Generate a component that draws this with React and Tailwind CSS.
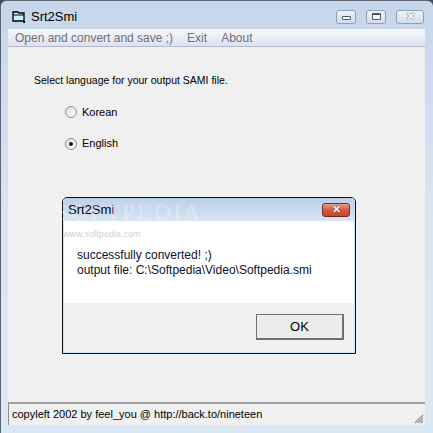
import React from 'react';

const sans = { fontFamily: '"Liberation Sans", Arial, sans-serif' };

const CaptionButton = ({ width, children }) => (
  <div
    className={`h-[14px] ${width} flex items-center justify-center rounded-[3px] border border-[#8e9fb6] bg-gradient-to-b from-[#eef3fa] to-[#d3deec]`}
  >
    {children}
  </div>
);

const Radio = ({ checked, label }) => (
  <div className="flex items-center gap-[5px]">
    <div className="w-[12px] h-[12px] rounded-full border border-[#8f8f8f] bg-gradient-to-br from-[#dcdcdc] to-white flex items-center justify-center">
      {checked && <div className="w-[4px] h-[4px] rounded-full bg-[#1a1a1a]" />}
    </div>
    <span className="text-[11px] text-black">{label}</span>
  </div>
);

const App = () => {
  return (
    <div
      className="relative w-[433px] h-[433px] overflow-hidden bg-[#3b4a5c]"
      style={sans}
    >
      <div className="w-[433px] h-[433px] flex flex-col rounded-t-[6px] border-t border-l border-[#5b6470] bg-gradient-to-b from-[#c6d6eb] via-[#d9e5f3] to-[#dbe7f4]">
        {/* Title bar */}
        <div className="h-[28px] flex items-center pl-[11px] pr-[9px] pt-[3px]">
          <svg width="14" height="12" viewBox="0 0 14 12" className="mr-[5px]">
            <path d="M1 1h5l1 1h5v8H1z" fill="#c8f4ff" stroke="#000" strokeWidth="1.3" />
            <path d="M1 4h11" stroke="#000" strokeWidth="1" />
            <rect x="11" y="10" width="2" height="2" fill="#000" />
          </svg>
          <span className="text-[13px] text-black">Srt2Smi</span>
          <div className="ml-auto flex items-center gap-[10px]">
            <CaptionButton width="w-[20px]">
              <div className="w-[9px] h-[4px] border border-[#4a5568] bg-white rounded-[1px] mt-[3px]" />
            </CaptionButton>
            <CaptionButton width="w-[20px]">
              <div className="w-[9px] h-[7px] border border-[#4a5568] border-t-2 bg-white rounded-[1px]" />
            </CaptionButton>
            <CaptionButton width="w-[28px]">
              <span className="text-[11px] font-bold text-white leading-none [text-shadow:0_0_1px_#4a5568,0_0_1px_#4a5568]">✕</span>
            </CaptionButton>
          </div>
        </div>

        {/* Menu bar */}
        <div className="ml-[7px] mr-[8px] h-[18px] flex items-center gap-[14px] pl-[7px] border-b border-[#b3b9cb] bg-gradient-to-b from-[#f8f9fc] to-[#dde2f1] text-[12px] text-[#707070]">
          <span>Open and convert and save ;)</span>
          <span>Exit</span>
          <span>About</span>
        </div>

        {/* Client area */}
        <div className="ml-[7px] mr-[8px] flex-1 flex flex-col bg-[#f0f0f0] text-[11px] text-black">
          <div className="flex-1 pt-[26px] pl-[26px]">
            <div className="text-[10.5px]">Select language for your output SAMI file.</div>
            <div className="mt-[15px] ml-[31px] flex flex-col gap-[15px]">
              <Radio label="Korean" />
              <Radio checked label="English" />
            </div>
          </div>

          {/* Status bar */}
          <div className="h-[24px] flex items-end">
            <div className="relative w-full h-[23px] border-t-2 border-[#a0a0a0] border-l border-l-[#8e8e8e] flex items-center pl-[3px] text-[11px]">
              copyleft 2002 by feel_you @ http://back.to/nineteen
              <svg width="12" height="12" viewBox="0 0 12 12" className="absolute right-[1px] bottom-[1px]">
                <path d="M11 3L3 11M11 6L6 11M11 9L9 11" stroke="#9a9a9a" strokeWidth="1.5" />
              </svg>
            </div>
          </div>
        </div>
        <div className="h-[8px]" />
      </div>

      {/* Message dialog */}
      <div className="absolute left-[62px] top-[197px] w-[294px] h-[157px] flex flex-col rounded-t-[5px] border border-[#111] bg-[#f0f0f0] overflow-hidden">
        <div className="h-[23px] flex items-center pl-[5px] pr-[5px] bg-gradient-to-b from-[#bdd0e8] to-[#d8e5f4]">
          <span className="text-[13px] text-black">Srt2Smi</span>
          <div className="ml-auto w-[28px] h-[14px] rounded-[3px] border border-[#7a2b20] bg-gradient-to-b from-[#e8a08e] via-[#d4593f] to-[#c9442a] flex items-center justify-center">
            <span className="text-[11px] font-bold text-white leading-none [text-shadow:0_0_1px_#5a1a10,0_0_1px_#5a1a10]">✕</span>
          </div>
        </div>
        <div className="flex-1 flex flex-col border-l border-r border-b border-[#c5e6f5]">
          <div className="h-[82px] bg-white pl-[13px] pt-[27px] text-[12px] leading-[15px] text-[#10102a]">
            <div>successfully converted! ;)</div>
            <div>output file: C:\Softpedia\Video\Softpedia.smi</div>
          </div>
          <div className="flex-1 flex justify-end items-start pt-[11px] pr-[10px]">
            <button className="w-[88px] h-[26px] border border-[#707070] border-r-2 border-b-2 bg-[#ececec] text-[13px] text-black">
              OK
            </button>
          </div>
        </div>
      </div>

      {/* Watermark */}
      <div className="absolute left-[55px] top-[194px] pointer-events-none select-none">
        <div className="text-[24px] tracking-[2px] text-white/30" style={{ fontFamily: '"Liberation Serif", serif' }}>
          SOFTPEDIA
        </div>
        <div className="ml-[8px] -mt-[2px] text-[9px] text-[#d0d0d0]">www.softpedia.com</div>
      </div>
    </div>
  );
};

export default App;
